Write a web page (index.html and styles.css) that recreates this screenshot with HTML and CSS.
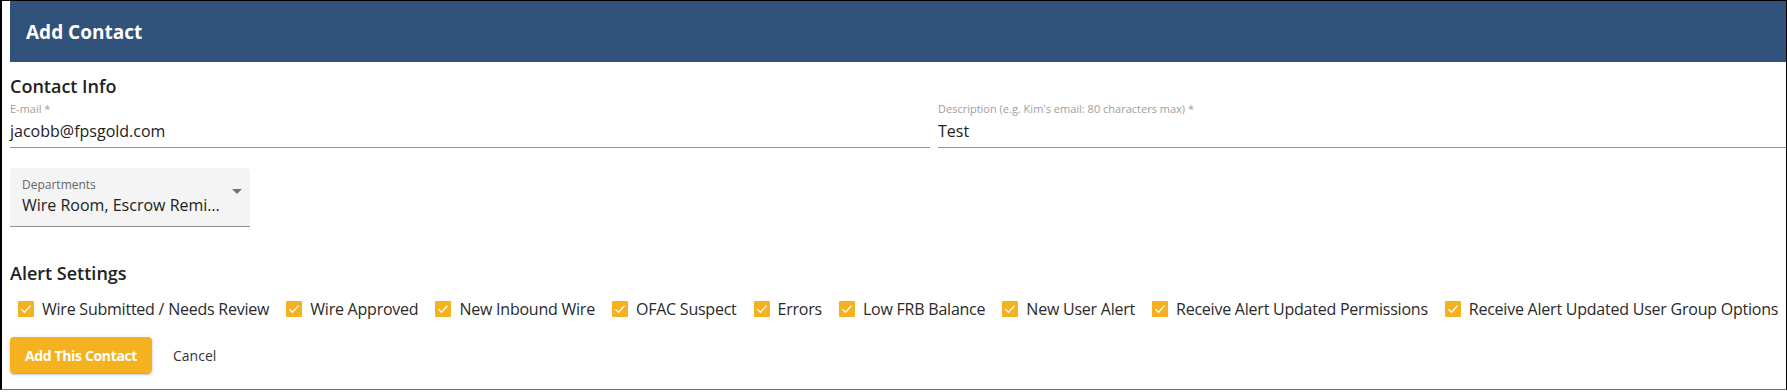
FILE: index.html
```html
<!DOCTYPE html>
<html lang="en">
<head>
  <meta charset="UTF-8">
  <title>Add Contact</title>
  <meta name="viewport" content="width=device-width, initial-scale=1.0">
  <link rel="stylesheet" href="styles.css">
</head>
<body>
  <div class="dialog">
    <header class="dialog-title">
      <h2>Add Contact</h2>
    </header>

    <div class="dialog-body">
      <h3 class="section-title">Contact Info</h3>
      <div class="field-row">
        <div class="field">
          <label for="email">E-mail *</label>
          <div class="field-value" id="email">jacobb@fpsgold.com</div>
        </div>
        <div class="field">
          <label for="descricao">Description (e.g. Kim's email: 80 characters max) *</label>
          <div class="field-value" id="descricao">Test</div>
        </div>
      </div>

      <div class="select-box">
        <div class="select-text">
          <span class="select-label">Departments</span>
          <span class="select-value">Wire Room, Escrow Remi…</span>
        </div>
        <svg class="select-arrow" width="24" height="24" viewBox="0 0 24 24"><path d="M7 10l5 5 5-5z" fill="#757575"/></svg>
      </div>

      <h3 class="section-title alert-title">Alert Settings</h3>
      <div class="checks">
        <label class="check"><span class="box"><svg width="16" height="16" viewBox="0 0 16 16"><polyline points="3.5,8.3 6.5,11.3 12.5,4.6" fill="none" stroke="#fff" stroke-width="1.3"/></svg></span>Wire Submitted / Needs Review</label>
        <label class="check"><span class="box"><svg width="16" height="16" viewBox="0 0 16 16"><polyline points="3.5,8.3 6.5,11.3 12.5,4.6" fill="none" stroke="#fff" stroke-width="1.3"/></svg></span>Wire Approved</label>
        <label class="check"><span class="box"><svg width="16" height="16" viewBox="0 0 16 16"><polyline points="3.5,8.3 6.5,11.3 12.5,4.6" fill="none" stroke="#fff" stroke-width="1.3"/></svg></span>New Inbound Wire</label>
        <label class="check"><span class="box"><svg width="16" height="16" viewBox="0 0 16 16"><polyline points="3.5,8.3 6.5,11.3 12.5,4.6" fill="none" stroke="#fff" stroke-width="1.3"/></svg></span>OFAC Suspect</label>
        <label class="check"><span class="box"><svg width="16" height="16" viewBox="0 0 16 16"><polyline points="3.5,8.3 6.5,11.3 12.5,4.6" fill="none" stroke="#fff" stroke-width="1.3"/></svg></span>Errors</label>
        <label class="check"><span class="box"><svg width="16" height="16" viewBox="0 0 16 16"><polyline points="3.5,8.3 6.5,11.3 12.5,4.6" fill="none" stroke="#fff" stroke-width="1.3"/></svg></span>Low FRB Balance</label>
        <label class="check"><span class="box"><svg width="16" height="16" viewBox="0 0 16 16"><polyline points="3.5,8.3 6.5,11.3 12.5,4.6" fill="none" stroke="#fff" stroke-width="1.3"/></svg></span>New User Alert</label>
        <label class="check"><span class="box"><svg width="16" height="16" viewBox="0 0 16 16"><polyline points="3.5,8.3 6.5,11.3 12.5,4.6" fill="none" stroke="#fff" stroke-width="1.3"/></svg></span>Receive Alert Updated Permissions</label>
        <label class="check"><span class="box"><svg width="16" height="16" viewBox="0 0 16 16"><polyline points="3.5,8.3 6.5,11.3 12.5,4.6" fill="none" stroke="#fff" stroke-width="1.3"/></svg></span>Receive Alert Updated User Group Options</label>
      </div>

      <div class="actions">
        <button type="button" class="btn-primary">Add This Contact</button>
        <button type="button" class="btn-text">Cancel</button>
      </div>
    </div>
  </div>
</body>
</html>
```

FILE: styles.css
```css
* {
  margin: 0;
  padding: 0;
  box-sizing: border-box;
}

body {
  font-family: "Open Sans", Arial, sans-serif;
  background-color: #fff;
  color: #212121;
}

.dialog {
  height: 390px;
  border-top: 1px solid #000;
  border-left: 2px solid #000;
  border-right: 1px solid #000;
  border-bottom: 1px solid #6e6e6e;
  box-shadow: 0 1px 0 #c6c6c6;
  padding-left: 8px;
}

.dialog-title {
  height: 61px;
  background-color: #30527b;
  display: flex;
  align-items: center;
  padding-left: 16px;
}

.dialog-title h2 {
  font-size: 19px;
  font-weight: 700;
  color: #fff;
  line-height: 24px;
}

.dialog-body {
  padding-top: 12px;
}

.section-title {
  font-size: 18px;
  font-weight: 600;
  line-height: 24px;
  color: #222;
}

.field-row {
  display: grid;
  grid-template-columns: 920px 1fr;
  gap: 8px;
  margin-top: 4px;
}

.field {
  display: flex;
  flex-direction: column;
}

.field label {
  font-size: 11px;
  line-height: 14px;
  color: #9e9e9e;
}

.field-value {
  margin-top: 5px;
  font-size: 16px;
  line-height: 20px;
  padding-bottom: 6px;
  border-bottom: 1px solid #949494;
  color: #222;
}

.select-box {
  width: 240px;
  margin-top: 20px;
  background-color: #f4f4f4;
  border-radius: 4px 4px 0 0;
  border-bottom: 1px solid #8f8f8f;
  padding: 11px 0 11px 12px;
  display: flex;
  align-items: center;
}

.select-text {
  width: 201px;
  display: flex;
  flex-direction: column;
}

.select-label {
  font-size: 12px;
  line-height: 12px;
  color: #666;
}

.select-value {
  margin-top: 4px;
  font-size: 16px;
  line-height: 20px;
  white-space: nowrap;
  color: #222;
}

.select-arrow {
  margin-left: 2px;
  margin-top: -12px;
}

.alert-title {
  margin-top: 34px;
}

.checks {
  display: flex;
  gap: 17px;
  margin-top: 14px;
  padding-left: 8px;
}

.check {
  display: flex;
  align-items: center;
  gap: 8px;
  font-size: 16px;
  line-height: 20px;
  letter-spacing: -0.23px;
  color: #2a2a2a;
  white-space: nowrap;
}

.box {
  width: 16px;
  height: 16px;
  background-color: #f5b11f;
  border-radius: 1px;
  display: flex;
}

.actions {
  display: flex;
  align-items: center;
  gap: 12px;
  margin-top: 18px;
}

.btn-primary {
  height: 36px;
  width: 142px;
  background-color: #f5b11f;
  color: #fff;
  border: none;
  border-radius: 4px;
  font-family: "Open Sans", Arial, sans-serif;
  font-size: 14px;
  font-weight: 700;
  letter-spacing: -0.35px;
  box-shadow: 0 3px 1px -2px rgba(0,0,0,0.2), 0 2px 2px 0 rgba(0,0,0,0.14), 0 1px 5px 0 rgba(0,0,0,0.12);
  cursor: pointer;
}

.btn-text {
  height: 36px;
  padding: 0 9px;
  background: none;
  border: none;
  color: #333;
  font-family: "Open Sans", Arial, sans-serif;
  font-size: 14px;
  cursor: pointer;
}
```
